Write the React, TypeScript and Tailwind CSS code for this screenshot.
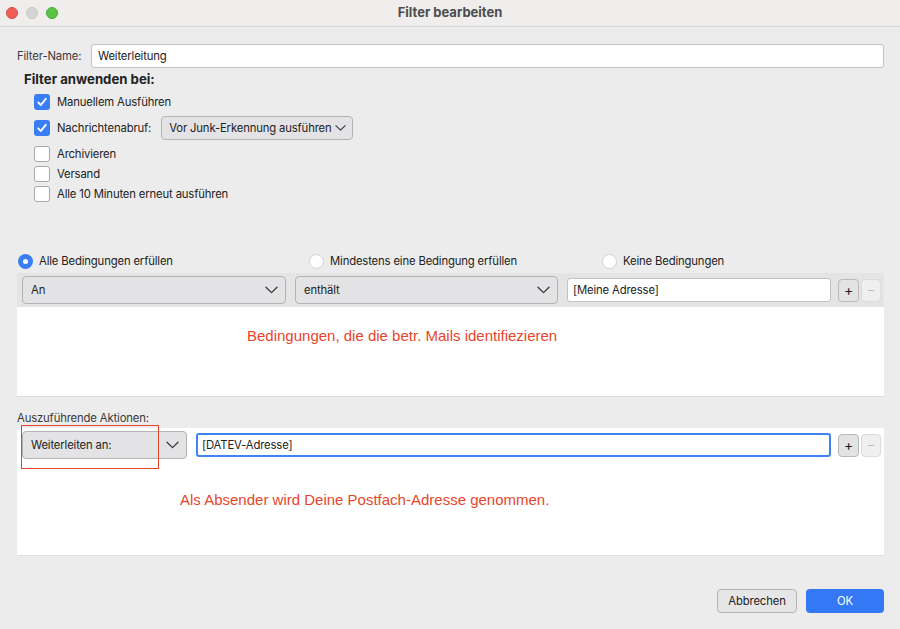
import React from "react";

const Chevron = ({ w = 13 }: { w?: number }) => (
  <svg width={w} height="8" viewBox="0 0 13 8">
    <path d="M1 1.2 L6.5 6.6 L12 1.2" fill="none" stroke="#3a3a3a" strokeWidth="1.3" strokeLinecap="round" strokeLinejoin="round" />
  </svg>
);

const Check = ({ checked }: { checked: boolean }) =>
  checked ? (
    <div className="w-[16px] h-[16px] shrink-0 rounded-[3px] bg-[#3a7ef5] flex items-center justify-center">
      <svg width="12" height="12" viewBox="0 0 12 12">
        <path d="M2.2 6.4 L4.8 9 L9.8 2.8" fill="none" stroke="white" strokeWidth="1.9" strokeLinecap="round" strokeLinejoin="round" />
      </svg>
    </div>
  ) : (
    <div className="w-[16px] h-[16px] shrink-0 rounded-[3px] bg-white border border-[#a9a9a9]" />
  );

const Radio = ({ on }: { on: boolean }) =>
  on ? (
    <div className="w-[15px] h-[15px] shrink-0 rounded-full bg-[#3a7ef5] flex items-center justify-center">
      <div className="w-[5px] h-[5px] rounded-full bg-white" />
    </div>
  ) : (
    <div className="w-[15px] h-[15px] shrink-0 rounded-full bg-white border border-[#d2d2d2]" />
  );

const Select = ({ label, className = "" }: { label: string; className?: string }) => (
  <div className={`h-[28px] shrink-0 rounded-[4px] border border-[#b3b3b3] bg-[#e3e3e5] flex items-center justify-between pl-[8px] pr-[7px] whitespace-nowrap ${className}`}>
    <span>{label}</span>
    <Chevron />
  </div>
);

const PlusMinus = () => (
  <div className="flex items-center gap-[2px] ml-[7px] shrink-0">
    <div className="w-[21px] h-[23px] rounded-[4px] border border-[#b9b9b9] bg-[#e3e3e5] flex items-center justify-center text-[14px] text-[#1f1f1f] leading-none">
      +
    </div>
    <div className="w-[20px] h-[23px] rounded-[4px] border border-[#dcdcdc] bg-[#efefef] flex items-center justify-center text-[12px] text-[#b8b8b8] leading-none">
      −
    </div>
  </div>
);

export default function App() {
  return (
    <div
      className="w-[900px] h-[629px] bg-[#ececec] text-[11.3px] tracking-[-0.15px] text-[#222] flex flex-col overflow-hidden whitespace-nowrap"
      style={{ fontFamily: "Inter, 'Liberation Sans', sans-serif" }}
    >
      {/* Title bar */}
      <div className="h-[27px] bg-[#efeeec] border-b border-[#d6d6d6] flex items-center relative shrink-0">
        <div className="flex items-center gap-[8px] pl-[6px]">
          <div className="w-[12px] h-[12px] rounded-full bg-[#ee5f57] border border-[#dd4a42]" />
          <div className="w-[12px] h-[12px] rounded-full bg-[#d5d5d5] border border-[#c6c6c6]" />
          <div className="w-[12px] h-[12px] rounded-full bg-[#5bc246] border border-[#4aad37]" />
        </div>
        <div className="absolute inset-0 flex items-center justify-center text-[13px] tracking-normal font-bold text-[#4c4c4c]">
          Filter bearbeiten
        </div>
      </div>

      <div className="flex flex-col pl-[17px] pr-[16px]">
        {/* Filter name */}
        <div className="flex items-center mt-[17px]">
          <span className="w-[74px] text-[#3a3a3a]">Filter-Name:</span>
          <div className="flex-1 h-[24px] bg-white border border-[#c2c2c2] rounded-[3px] flex items-center pl-[6px]">
            Weiterleitung
          </div>
        </div>

        <div className="pl-[7px] mt-[2px] h-[18px] leading-[18px] text-[13.2px] tracking-normal font-bold text-[#222]">
          Filter anwenden bei:
        </div>

        <div className="pl-[17px] flex flex-col">
          <div className="h-[20px] mt-[4px] flex items-center gap-[7px]">
            <Check checked />
            <span>Manuellem Ausführen</span>
          </div>
          <div className="h-[26px] mt-[3px] flex items-center gap-[7px]">
            <Check checked />
            <span>Nachrichtenabruf:</span>
            <div className="ml-[3px] h-[24px] w-[192px] rounded-[4px] border border-[#b3b3b3] bg-[#e3e3e5] flex items-center justify-between pl-[7px] pr-[6px]">
              <span>Vor Junk-Erkennung ausführen</span>
              <Chevron w={11} />
            </div>
          </div>
          <div className="h-[20px] mt-[3px] flex items-center gap-[7px]">
            <Check checked={false} />
            <span>Archivieren</span>
          </div>
          <div className="h-[20px] flex items-center gap-[7px]">
            <Check checked={false} />
            <span>Versand</span>
          </div>
          <div className="h-[20px] flex items-center gap-[7px]">
            <Check checked={false} />
            <span>Alle 10 Minuten erneut ausführen</span>
          </div>
        </div>

        {/* Radios */}
        <div className="h-[20px] mt-[47px] flex items-center">
          <div className="flex items-center gap-[6px] pl-[1px] w-[292px]">
            <Radio on />
            <span>Alle Bedingungen erfüllen</span>
          </div>
          <div className="flex items-center gap-[6px] w-[293px]">
            <Radio on={false} />
            <span>Mindestens eine Bedingung erfüllen</span>
          </div>
          <div className="flex items-center gap-[6px]">
            <Radio on={false} />
            <span>Keine Bedingungen</span>
          </div>
        </div>

        {/* Conditions panel */}
        <div className="mt-[2px] h-[124px] bg-white border-b border-[#dedede] flex flex-col">
          <div className="h-[34px] bg-[#e4e4e4] flex items-center pl-[5px] pr-[3px]">
            <Select label="An" className="w-[264px]" />
            <Select label="enthält" className="w-[263px] ml-[9px]" />
            <div className="flex-1 min-w-0 ml-[9px] h-[24px] bg-white border border-[#c2c2c2] rounded-[3px] flex items-center pl-[5px]">
              [Meine Adresse]
            </div>
            <PlusMinus />
          </div>
          <div
            className="pl-[230px] mt-[18px] text-[15px] tracking-normal text-[#e8452c]"
            style={{ fontFamily: "'Liberation Sans', Arial, sans-serif" }}
          >
            Bedingungen, die die betr. Mails identifiezieren
          </div>
        </div>

        <div className="mt-[13px] h-[16px] leading-[16px] text-[#3a3a3a]">Auszuführende Aktionen:</div>

        {/* Actions panel */}
        <div className="mt-[2px] h-[128px] bg-white border-b border-[#dedede] flex flex-col relative">
          <div className="h-[34px] flex items-center pl-[5px] pr-[3px]">
            <Select label="Weiterleiten an:" className="w-[165px]" />
            <div className="flex-1 min-w-0 ml-[9px] h-[24px] bg-white border-2 border-[#3f84f2] rounded-[3px] flex items-center pl-[4px]">
              [DATEV-Adresse]
            </div>
            <PlusMinus />
          </div>
          <div className="absolute left-[4px] top-[-3px] w-[138px] h-[44px] border-[1.5px] border-[#e8452c]" />
          <div
            className="pl-[163px] mt-[27px] text-[15px] tracking-normal text-[#e8452c]"
            style={{ fontFamily: "'Liberation Sans', Arial, sans-serif" }}
          >
            Als Absender wird Deine Postfach-Adresse genommen.
          </div>
        </div>

        {/* Buttons */}
        <div className="mt-[33px] flex justify-end gap-[9px]">
          <div className="w-[80px] h-[24px] rounded-[4px] border border-[#b3b3b3] bg-[#e6e6e6] flex items-center justify-center">
            Abbrechen
          </div>
          <div className="w-[78px] h-[24px] rounded-[4px] bg-[#3478f6] text-white flex items-center justify-center">
            OK
          </div>
        </div>
      </div>
    </div>
  );
}
